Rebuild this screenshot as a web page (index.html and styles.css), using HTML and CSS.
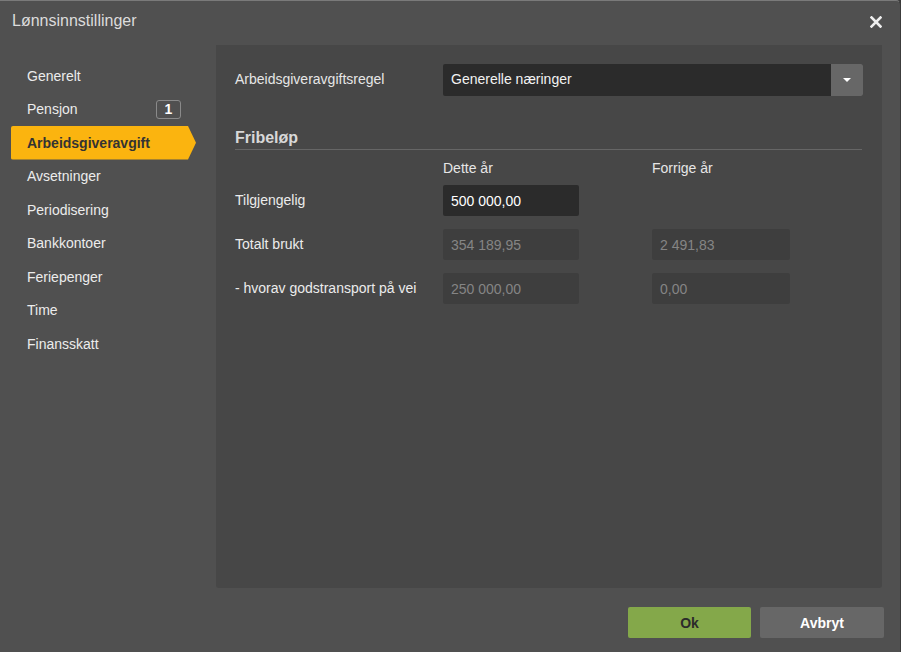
FILE: index.html
```html
<!DOCTYPE html>
<html lang="no">
<head>
<meta charset="utf-8">
<title>Lønnsinnstillinger</title>
<link rel="stylesheet" href="styles.css">
</head>
<body>
<div class="dialog">
  <header class="dialog-header">
    <h1 class="dialog-title">Lønnsinnstillinger</h1>
    <button class="close-btn" aria-label="Lukk">
      <svg width="12" height="12" viewBox="0 0 12 12"><path d="M1.5 1.5 L10.5 10.5 M10.5 1.5 L1.5 10.5" stroke="#eeeeee" stroke-width="2.6" stroke-linecap="square"/></svg>
    </button>
  </header>
  <div class="dialog-body">
    <nav class="sidebar">
      <a class="nav-item">Generelt</a>
      <a class="nav-item">Pensjon <span class="badge">1</span></a>
      <a class="nav-item active">Arbeidsgiveravgift</a>
      <a class="nav-item">Avsetninger</a>
      <a class="nav-item">Periodisering</a>
      <a class="nav-item">Bankkontoer</a>
      <a class="nav-item">Feriepenger</a>
      <a class="nav-item">Time</a>
      <a class="nav-item">Finansskatt</a>
    </nav>
    <section class="panel">
      <div class="field-row">
        <label class="field-label">Arbeidsgiveravgiftsregel</label>
        <div class="select">
          <span class="select-value">Generelle næringer</span>
          <span class="select-btn">
            <svg width="8" height="4" viewBox="0 0 8 4"><path d="M0 0 H8 L4 4 Z" fill="#ffffff"/></svg>
          </span>
        </div>
      </div>
      <h2 class="section-title">Fribeløp</h2>
      <div class="col-heads">
        <span class="col-head">Dette år</span>
        <span class="col-head">Forrige år</span>
      </div>
      <div class="grid">
        <span class="row-label">Tilgjengelig</span>
        <span class="input">500 000,00</span>
        <span></span>

        <span class="row-label">Totalt brukt</span>
        <span class="input disabled">354 189,95</span>
        <span class="input disabled wide">2 491,83</span>

        <span class="row-label">- hvorav godstransport på vei</span>
        <span class="input disabled">250 000,00</span>
        <span class="input disabled wide">0,00</span>
      </div>
    </section>
  </div>
  <footer class="dialog-footer">
    <button class="btn btn-ok">Ok</button>
    <button class="btn btn-cancel">Avbryt</button>
  </footer>
</div>
</body>
</html>
```

FILE: styles.css
```css
* {
  box-sizing: border-box;
}

html, body {
  margin: 0;
  padding: 0;
  background: #3a3a3a;
}

body {
  font-family: "Liberation Sans", Arial, sans-serif;
  font-size: 14px;
  color: #e6e6e6;
}

.dialog {
  width: 901px;
  height: 652px;
  background: #505050;
  border-top: 1px solid #7a7a7a;
  border-right: 1px solid #3c3c3c;
  border-top-right-radius: 5px;
  display: flex;
  flex-direction: column;
}

.dialog-header {
  height: 44px;
  display: flex;
  align-items: center;
  justify-content: space-between;
  padding: 0 18px 0 12px;
}

.dialog-title {
  margin: 0 0 4px 0;
  font-size: 16px;
  font-weight: normal;
  color: #dcdcdc;
}

.close-btn {
  background: none;
  border: 0;
  padding: 0;
  margin-bottom: 3px;
  display: flex;
  cursor: pointer;
}

.dialog-body {
  display: flex;
  height: 543px;
}

.sidebar {
  width: 216px;
  padding-top: 14px;
  display: flex;
  flex-direction: column;
}

.nav-item {
  height: 33.5px;
  width: 185px;
  margin-left: 11px;
  padding: 0 16px 0 16px;
  display: flex;
  align-items: center;
  justify-content: space-between;
  color: #ececec;
  cursor: pointer;
}

.nav-item.active {
  background: #fbb40f;
  color: #333333;
  font-weight: bold;
  border-radius: 2px 0 0 2px;
  clip-path: polygon(0 0, 177px 0, 185px 50%, 177px 100%, 0 100%);
}

.badge {
  width: 25px;
  height: 19px;
  border: 1px solid #8a8a8a;
  border-radius: 3px;
  display: flex;
  align-items: center;
  justify-content: center;
  font-weight: bold;
  color: #ffffff;
  margin-right: -1px;
}

.panel {
  width: 666px;
  background: #474747;
  border-radius: 0 0 3px 3px;
  padding: 19px 19px 0 19px;
}

.field-row {
  display: flex;
  align-items: center;
}

.field-label {
  width: 208px;
  margin-top: -2px;
}

.select {
  width: 420px;
  height: 32px;
  display: flex;
  background: #2b2b2b;
  border-radius: 2px;
}

.select-value {
  flex: 1;
  display: flex;
  align-items: center;
  padding-left: 8px;
  color: #f2f2f2;
  margin-top: -2px;
}

.select-btn {
  width: 32px;
  background: #676767;
  display: flex;
  align-items: center;
  justify-content: center;
  border-radius: 0 2px 2px 0;
}

.section-title {
  margin: 33px 0 0 0;
  font-size: 16px;
  font-weight: bold;
  color: #d8d8d8;
  padding-bottom: 2px;
  border-bottom: 1px solid #666666;
  width: 627px;
  line-height: 18px;
}

.col-heads {
  display: flex;
  padding-left: 208px;
  margin-top: 10px;
  line-height: 16px;
}

.col-head {
  width: 209px;
  color: #e6e6e6;
}

.grid {
  display: grid;
  grid-template-columns: 208px 209px 138px;
  grid-auto-rows: 31px;
  row-gap: 13px;
  align-items: center;
  margin-top: 9px;
}

.row-label {
  color: #ececec;
  margin-top: -2px;
}

.input {
  height: 31px;
  display: flex;
  align-items: center;
  padding-left: 8px;
  border-radius: 2px;
  background: #2b2b2b;
  color: #ffffff;
  width: 136px;
}

.input.disabled {
  background: #3e3e3e;
  color: #858585;
}

.input.wide {
  width: 138px;
}

.dialog-footer {
  flex: 1;
  display: flex;
  justify-content: flex-end;
  align-items: flex-start;
  padding: 19px 16px 0 0;
  gap: 9px;
}

.btn {
  height: 31px;
  border: 0;
  border-radius: 2px;
  font-family: "Liberation Sans", Arial, sans-serif;
  font-size: 14px;
  font-weight: bold;
  cursor: pointer;
}

.btn-ok {
  width: 123px;
  background: #84a84a;
  color: #2b2b2b;
}

.btn-cancel {
  width: 124px;
  background: #676767;
  color: #ffffff;
}
```
